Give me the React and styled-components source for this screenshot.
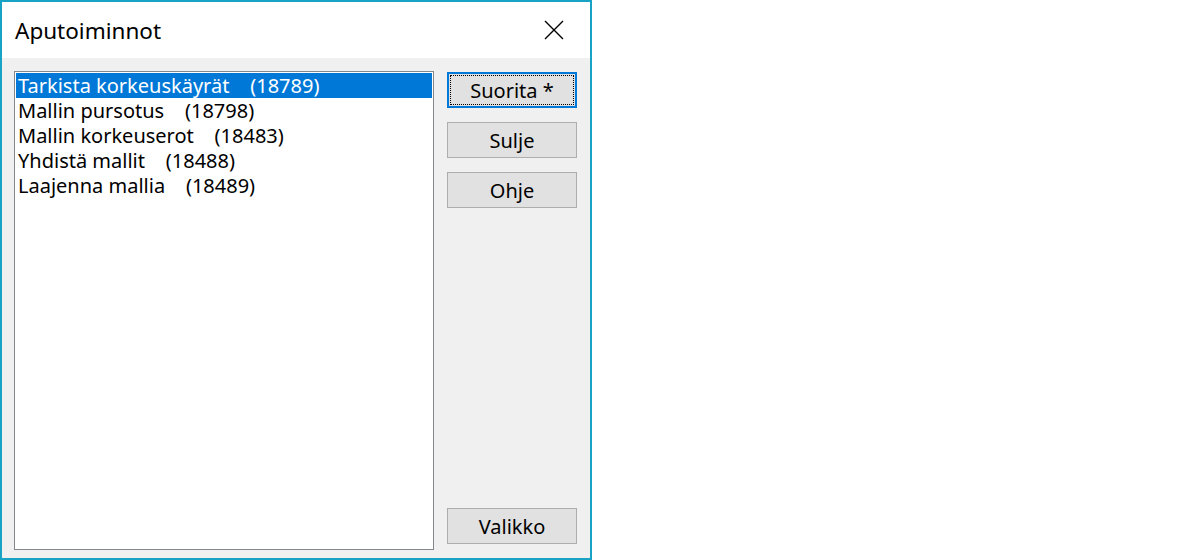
import React, { useState } from "react";
import styled, { createGlobalStyle } from "styled-components";

const GlobalStyle = createGlobalStyle`
  html, body {
    margin: 0;
    padding: 0;
    background: #ffffff;
  }
  body {
    font-family: "Noto Sans", "Open Sans", sans-serif;
  }
`;

const Window = styled.div`
  width: 592px;
  height: 560px;
  box-sizing: border-box;
  border: 2px solid #18a3c5;
  display: flex;
  flex-direction: column;
  background: #f0f0f0;
`;

const TitleBar = styled.div`
  height: 56px;
  background: #ffffff;
  display: flex;
  align-items: center;
  justify-content: space-between;
  padding-left: 13px;
  flex-shrink: 0;
`;

const Title = styled.span`
  font-size: 22.5px;
  color: #000000;
`;

const CloseButton = styled.button`
  width: 60px;
  height: 56px;
  border: none;
  background: transparent;
  display: flex;
  align-items: center;
  justify-content: center;
  padding: 0;
  margin-right: 6px;
  cursor: pointer;
`;

const Body = styled.div`
  flex: 1;
  display: flex;
  gap: 13px;
  padding: 13px 13px 8px 12px;
  min-height: 0;
`;

const ListBox = styled.ul`
  flex: 1;
  margin: 0;
  padding: 1px;
  list-style: none;
  background: #ffffff;
  border: 1px solid #828790;
`;

const Item = styled.li`
  height: 25px;
  line-height: 25px;
  padding-left: 2px;
  font-size: 20px;
  white-space: pre;
  color: ${(p) => (p.selected ? "#ffffff" : "#000000")};
  background: ${(p) => (p.selected ? "#0078d7" : "transparent")};
`;

const Buttons = styled.div`
  width: 130px;
  display: flex;
  flex-direction: column;
  gap: 14px;
  padding-top: 1px;
  padding-bottom: 6px;
`;

const Button = styled.button`
  width: 130px;
  height: 36px;
  box-sizing: border-box;
  background: #e1e1e1;
  border: ${(p) => (p.primary ? "2px solid #0078d7" : "1px solid #adadad")};
  font-family: "Noto Sans", "Open Sans", sans-serif;
  font-size: 20px;
  color: #000000;
  padding: 0;
  margin-top: ${(p) => (p.bottom ? "auto" : "0")};
  outline: ${(p) => (p.primary ? "1px dotted #000000" : "none")};
  outline-offset: -4px;
`;

const items = [
  "Tarkista korkeuskäyrät    (18789)",
  "Mallin pursotus    (18798)",
  "Mallin korkeuserot    (18483)",
  "Yhdistä mallit    (18488)",
  "Laajenna mallia    (18489)",
];

export default function App() {
  const [selected, setSelected] = useState(0);

  return (
    <>
      <GlobalStyle />
      <Window>
        <TitleBar>
          <Title>Aputoiminnot</Title>
          <CloseButton aria-label="Sulje">
            <svg width="20" height="20" viewBox="0 0 20 20">
              <path d="M1 1 L19 19 M19 1 L1 19" stroke="#000" strokeWidth="1.4" />
            </svg>
          </CloseButton>
        </TitleBar>
        <Body>
          <ListBox>
            {items.map((text, index) => (
              <Item
                key={index}
                selected={index === selected}
                onClick={() => setSelected(index)}
              >
                {text}
              </Item>
            ))}
          </ListBox>
          <Buttons>
            <Button primary>Suorita *</Button>
            <Button>Sulje</Button>
            <Button>Ohje</Button>
            <Button bottom>Valikko</Button>
          </Buttons>
        </Body>
      </Window>
    </>
  );
}
